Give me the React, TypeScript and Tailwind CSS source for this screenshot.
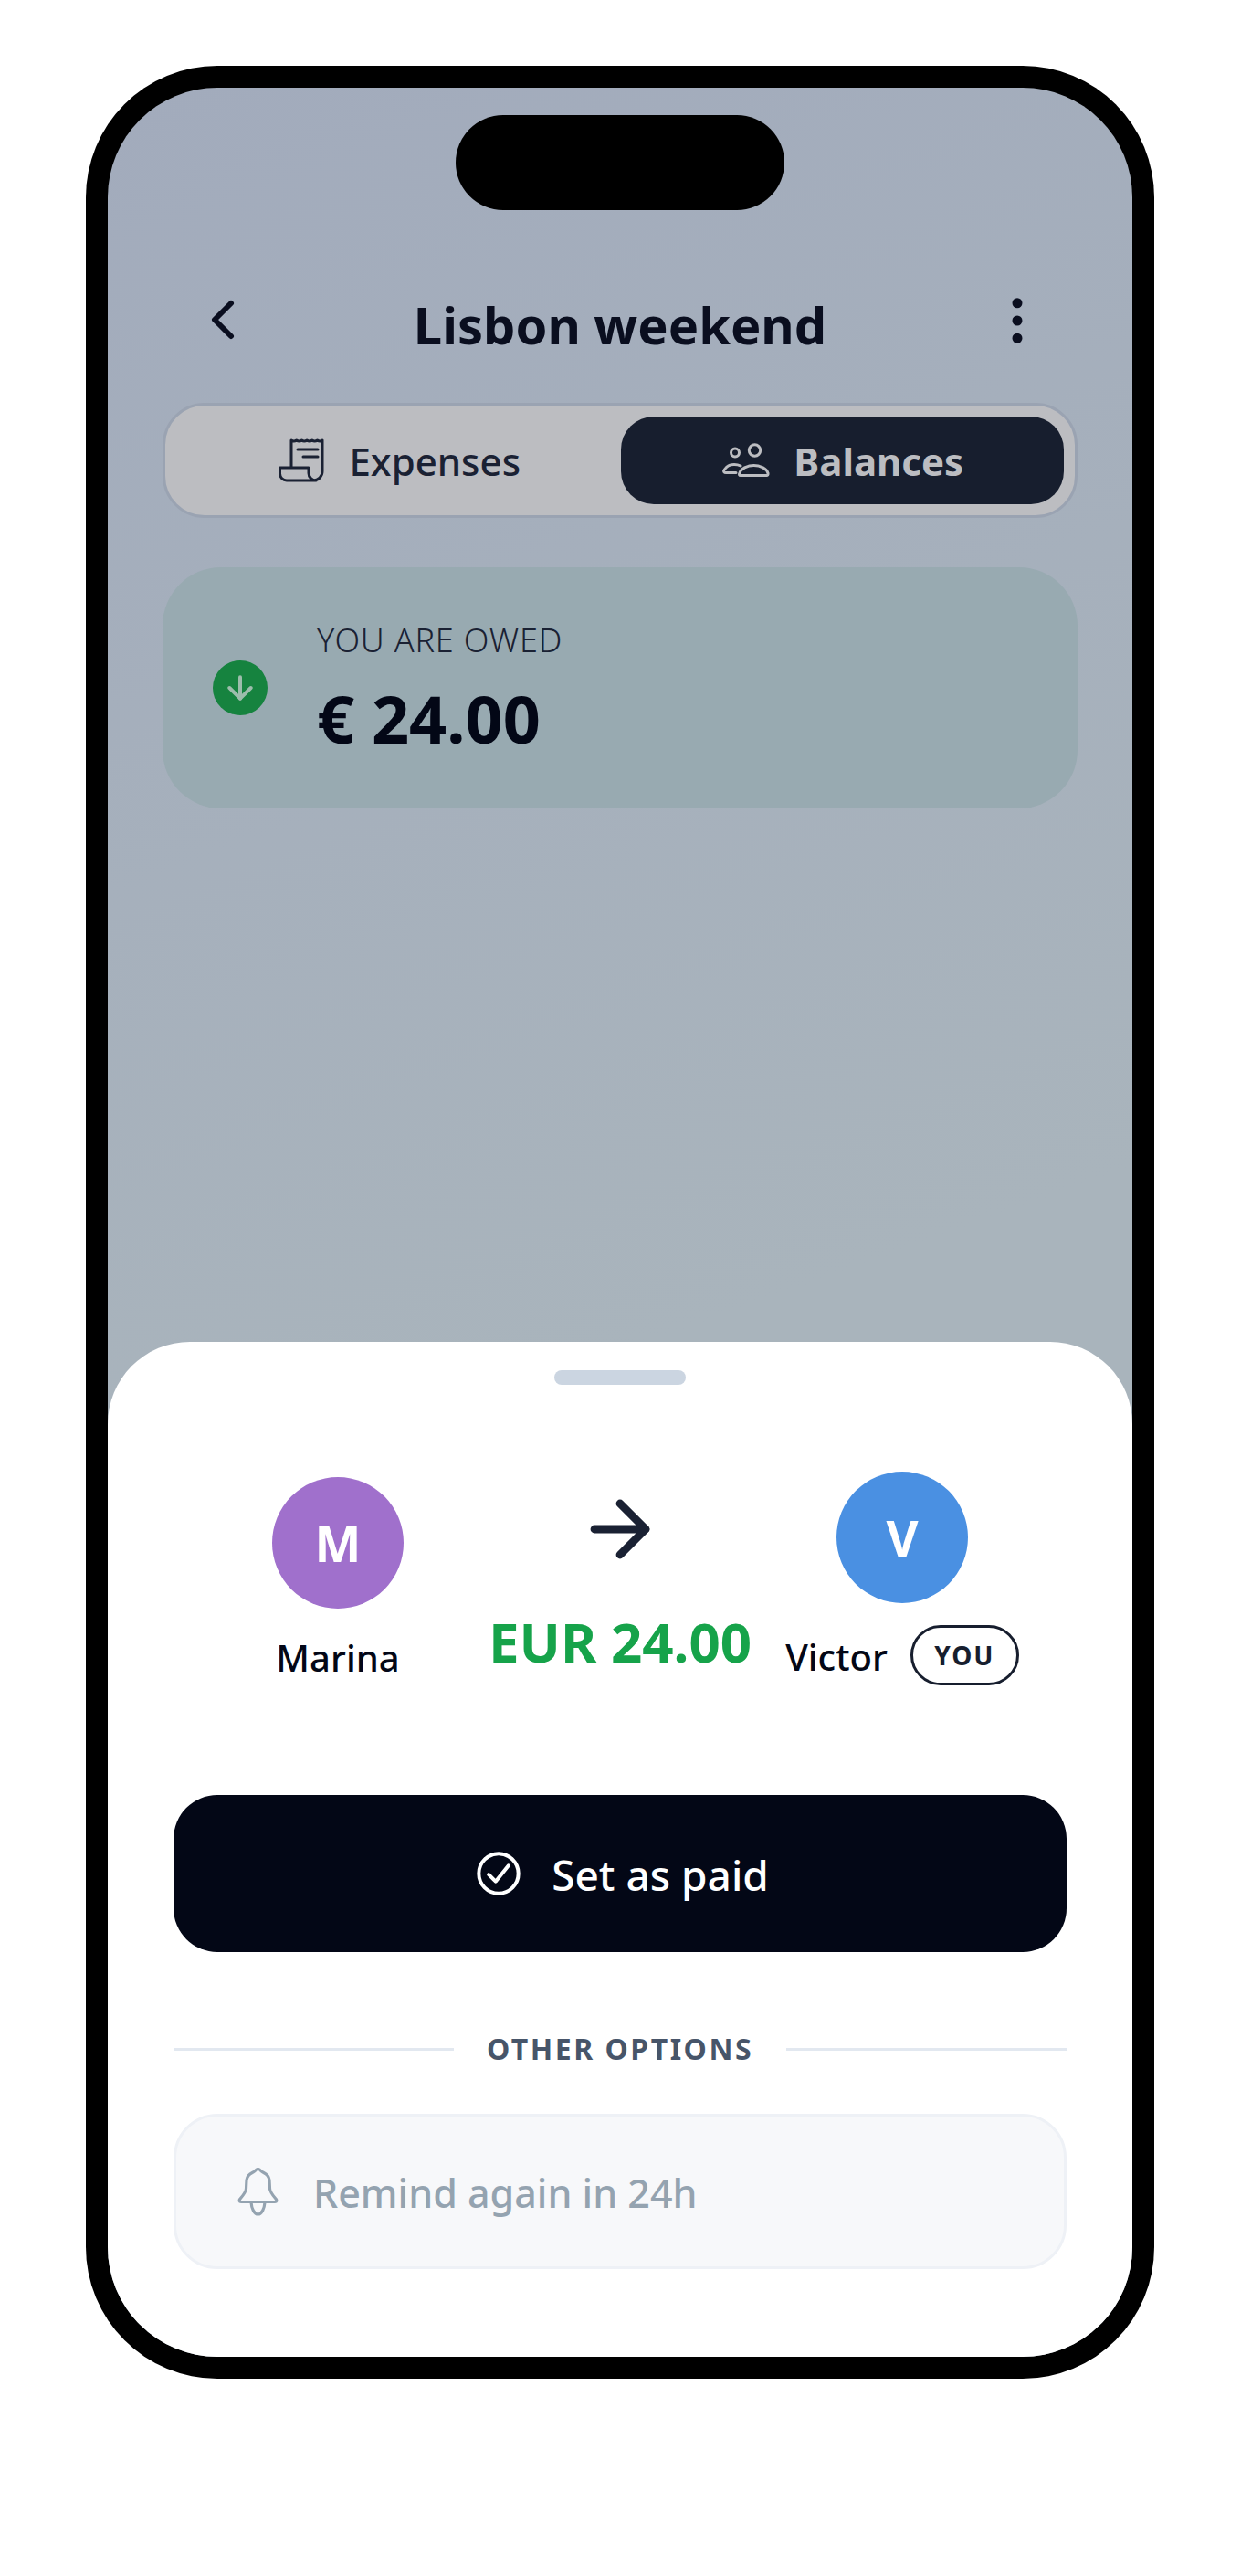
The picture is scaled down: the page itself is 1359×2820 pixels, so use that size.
import { ArrowDown, ArrowRight, ChevronLeft, EllipsisVertical } from 'lucide-react';

function ReceiptIcon() {
  return (
    <svg width="50" height="48" viewBox="0 0 50 48" fill="none" stroke="currentColor" strokeWidth="3" strokeLinecap="round" strokeLinejoin="round">
      <path d="M14 31V2q2.800 2 5.700 0q2.800 2 5.700 0q2.800 2 5.700 0q2.800 2 5.700 0q2.800 2 5.700 0q2.800 2 5.500 0V36a10 10 0 0 1-10 10H9a7.500 7.500 0 0 1-7.500-7.500V32H33V38a8 8 0 0 0 8 8" />
      <path d="M21 12H43M27 20H43" />
    </svg>
  );
}

function PeopleIcon() {
  return (
    <svg width="52" height="38" viewBox="0 0 52 38" fill="none" stroke="currentColor" strokeWidth="3" strokeLinecap="round" strokeLinejoin="round">
      <circle cx="35.500" cy="8" r="6.200" />
      <circle cx="14" cy="10.500" r="4.500" />
      <path d="M20 35.500c-1.500 0-1.800-1-1.200-2.500C20.500 28 27 24.500 34.500 24.500S48.500 28 50 33c.4 1.500-.5 2.500-1.500 2.500Z" />
      <path d="M15 32.500H4c-2 0-3-1.500-2-3C4 26 8 23.500 13 23.500c3 0 5 .5 7 1.500" />
    </svg>
  );
}

function CheckIcon() {
  return (
    <svg width="52" height="52" viewBox="0 0 24 24" fill="none" stroke="currentColor" strokeWidth="1.850" strokeLinecap="round" strokeLinejoin="round">
      <circle cx="12" cy="12" r="10" />
      <path d="M7 12.500l3.500 3.500L17 8" />
    </svg>
  );
}

function BellIcon() {
  return (
    <svg width="45" height="53" viewBox="0 0 45 53" fill="none" stroke="currentColor" strokeWidth="3.200" strokeLinecap="round" strokeLinejoin="round">
      <path d="M22.500 1.500c-2 0-3 2-4.500 3c-2 1.500-7 2-8 9L9.500 23c-.3 4-3 7-6.500 11c-1.500 2-1 3.500 1 3.500H41c2 0 2.500-1.500 1-3.500c-3.500-4-6.200-7-6.500-11L35 13.500c-1-7-6-7.500-8-9c-1.500-1-2.500-3-4.500-3Z" />
      <path d="M15 38c.5 7 3.500 13 7.500 13s7-6 7.500-13" />
    </svg>
  );
}

export default function App() {
  return (
    <div className="w-[1359px] h-[2820px] bg-white pl-[94px] pt-[72px] font-['Noto_Sans',sans-serif]">
      <div className="w-[1170px] h-[2532px] bg-black rounded-[144px] p-6">
        <div className="relative w-full h-full rounded-[120px] overflow-hidden flex flex-col bg-[linear-gradient(160deg,#a2abbc,#a9b4bc_55%)]">
          <div className="absolute left-[381px] top-[30px] w-[360px] h-[104px] rounded-[52px] bg-black" />

          <div className="flex flex-col flex-1 px-[60px] pt-[218px]">
            <div className="flex items-center justify-between h-[72px] px-[30px]">
              <ChevronLeft className="w-[72px] h-[72px] text-[#0a0e1f]" strokeWidth={2} />
              <h1 className="text-[56px] leading-[72px] font-bold text-[#0a0e1f] mt-[10px]">Lisbon weekend</h1>
              <EllipsisVertical className="w-[72px] h-[66px] mt-[2px] text-[#0a0e1f]" strokeWidth={2} />
            </div>

            <div className="mt-[55px] h-[126px] rounded-[46px] border-[3px] border-[#9aa3b2] bg-[#bcbdc1] p-3 flex">
              <div className="flex-1 flex items-center justify-center gap-[27px] pl-[3px] text-[#1a2133] text-[42px] font-medium">
                <ReceiptIcon />
                <span>Expenses</span>
              </div>
              <div className="flex-1 flex items-center justify-center gap-[26px] pl-[2px] rounded-[36px] bg-[#171e2e] text-[#bcbdc1] text-[42px] font-bold">
                <PeopleIcon />
                <span>Balances</span>
              </div>
            </div>

            <div className="mt-[54px] h-[264px] rounded-[64px] bg-[#98aab1] flex items-center pl-[55px] gap-[54px]">
              <div className="w-[60px] h-[60px] rounded-full bg-[#16833f] flex items-center justify-center text-[#9dbdac]">
                <ArrowDown className="w-10 h-10" strokeWidth={2.4} />
              </div>
              <div className="flex flex-col">
                <span className="text-[36px] leading-[50px] font-light tracking-[0.8px] text-[#1a2133]">YOU ARE OWED</span>
                <span className="mt-[15px] text-[72px] leading-[90px] font-bold text-[#030716]">€ 24.00</span>
              </div>
            </div>
          </div>

          <div className="h-[1111px] bg-white rounded-t-[90px] flex flex-col px-[72px] pt-[31px]">
            <div className="self-center w-[144px] h-4 rounded-lg bg-[#cbd5e1]" />

            <div className="mt-[95px] grid grid-cols-[360px_minmax(0,1fr)_360px]">
              <div className="flex flex-col items-center pt-[6px]">
                <div className="w-[144px] h-[144px] rounded-full bg-[#a070cc] flex items-center justify-center text-white text-[54px] font-bold">M</div>
                <span className="mt-[26px] text-[40px] leading-[56px] font-medium text-[#030716]">Marina</span>
              </div>
              <div className="flex flex-col items-center whitespace-nowrap">
                <ArrowRight className="w-24 h-24 mt-[15px] text-[#1a2133]" strokeWidth={2.2} />
                <span className="mt-[35px] text-[60px] leading-[80px] font-bold text-[#16a34a]">EUR 24.00</span>
              </div>
              <div className="flex flex-col items-center">
                <div className="w-[144px] h-[144px] rounded-full bg-[#4a90e2] flex items-center justify-center text-white text-[54px] font-bold">V</div>
                <div className="mt-6 flex items-center gap-[25px]">
                  <span className="mt-1 text-[40px] leading-[56px] font-medium text-[#030716]">Victor</span>
                  <span className="w-[119px] h-[66px] rounded-[33px] border-[3px] border-[#171e2e] flex items-center justify-center text-[28px] font-bold tracking-[2px] text-[#171e2e]">YOU</span>
                </div>
              </div>
            </div>

            <div className="mt-[120px] h-[172px] rounded-[48px] bg-[#030716] flex items-center justify-center gap-8 pl-[4px] text-white text-[46px] font-medium">
              <CheckIcon />
              <span className="mt-[2px]">Set as paid</span>
            </div>

            <div className="mt-[86px] flex items-center gap-[36px]">
              <div className="flex-1 h-[3px] bg-[#e2e8f0]" />
              <span className="text-[32px] leading-[40px] font-bold tracking-[2.5px] text-[#475569]">OTHER OPTIONS</span>
              <div className="flex-1 h-[3px] bg-[#e2e8f0]" />
            </div>

            <div className="mt-[51px] h-[170px] rounded-[48px] border-[3px] border-[#eef1f6] bg-[#f7f8fa] flex items-center pl-[67px] gap-[38px] text-[#94a3b0] text-[43px] font-medium">
              <BellIcon />
              <span className="mt-1">Remind again in 24h</span>
            </div>
          </div>
        </div>
      </div>
    </div>
  );
}
